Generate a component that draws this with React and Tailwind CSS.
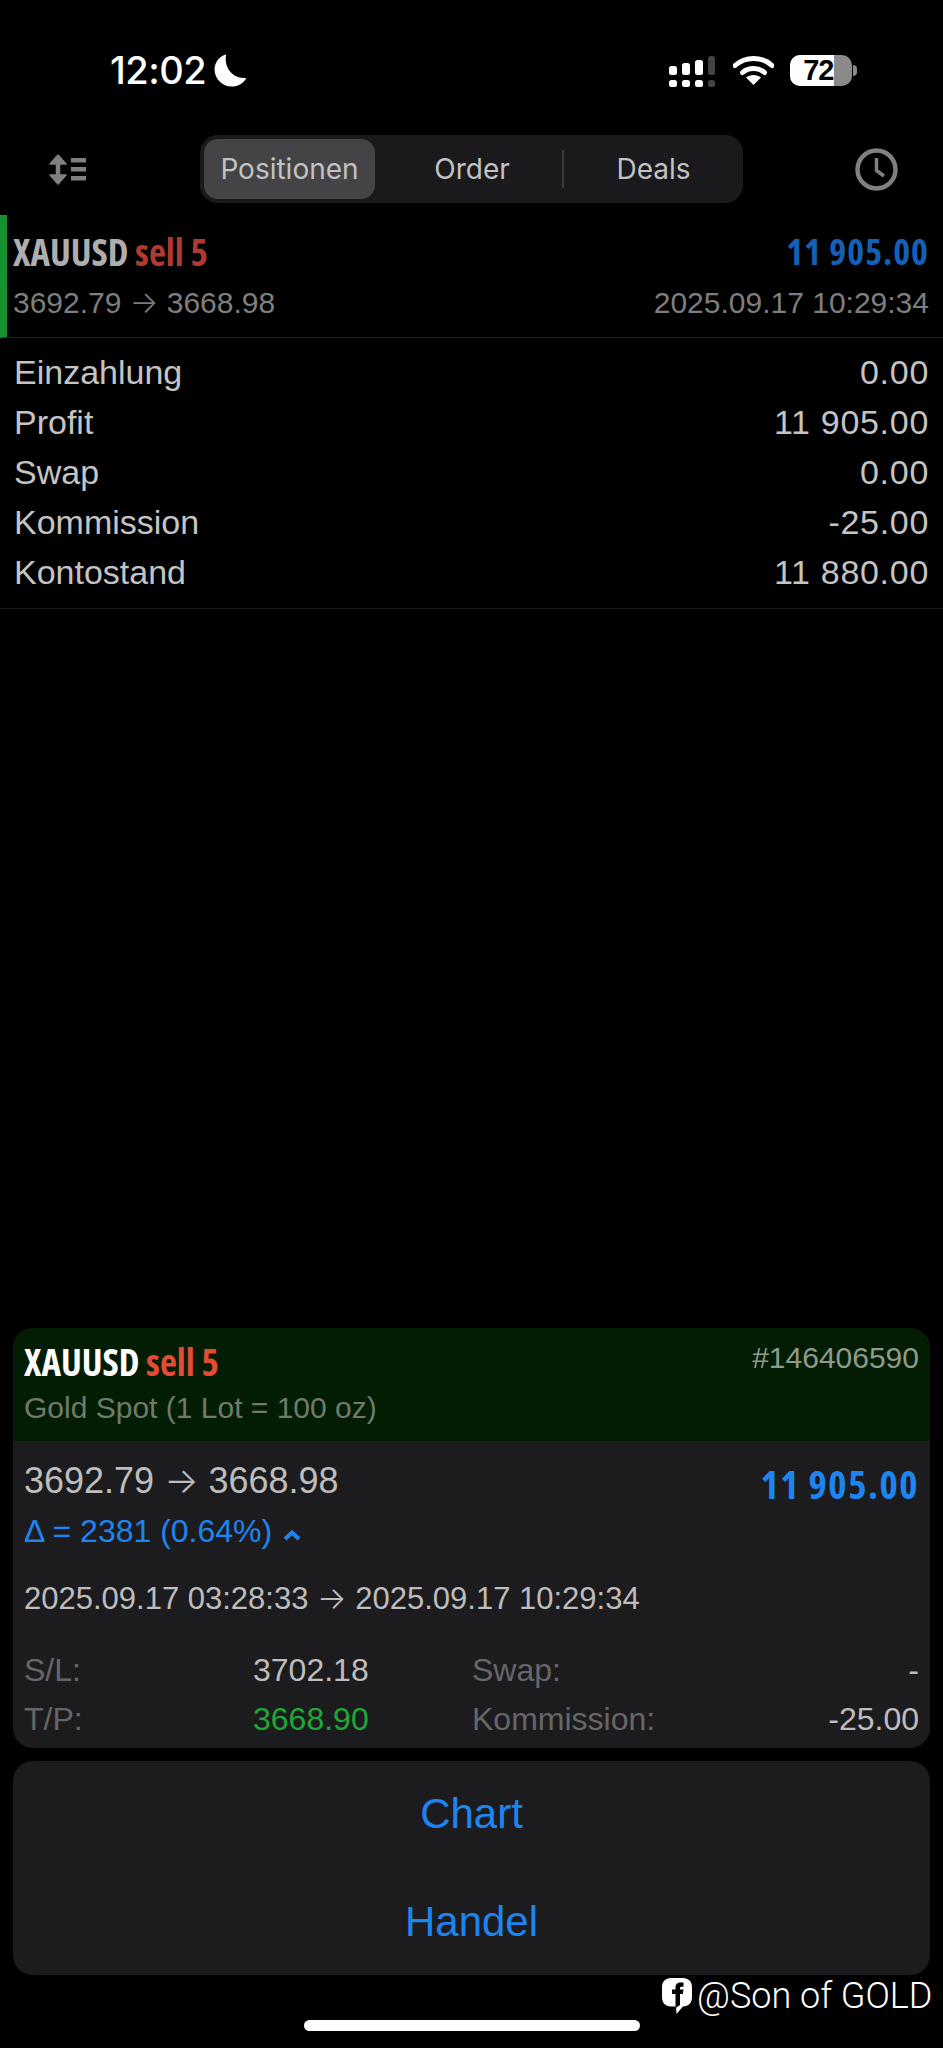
const sans = "font-['Liberation_Sans',Arial,sans-serif]";
const condensed = "font-['Open_Sans',sans-serif] [font-stretch:75%] font-bold";

const details = [
  ["Einzahlung", "0.00"],
  ["Profit", "11 905.00"],
  ["Swap", "0.00"],
  ["Kommission", "-25.00"],
  ["Kontostand", "11 880.00"],
];

const SignalIcon = () => (
  <svg width="47" height="32" viewBox="0 0 47 32" className="block">
    <rect x="0" y="10" width="8" height="9" rx="2.5" fill="#fff" />
    <rect x="13" y="7" width="8" height="12" rx="2.5" fill="#fff" />
    <rect x="26" y="4" width="8" height="15" rx="2.5" fill="#fff" />
    <rect x="39" y="0" width="7" height="19" rx="2.5" fill="#444" />
    <rect x="0" y="24" width="8" height="7" rx="2.5" fill="#fff" />
    <rect x="13" y="24" width="8" height="7" rx="2.5" fill="#fff" />
    <rect x="26" y="24" width="8" height="7" rx="2.5" fill="#fff" />
    <rect x="39" y="24" width="7" height="7" rx="2.5" fill="#444" />
  </svg>
);

const WifiIcon = () => (
  <svg width="41" height="30" viewBox="0 0 41 30" className="block">
    <path d="M2 10.5C12.5 1 28.5 1 39 10.5" fill="none" stroke="#fff" strokeWidth="5" strokeLinecap="round" />
    <path d="M9.5 17.5C15.5 12.2 25.5 12.2 31.5 17.5" fill="none" stroke="#fff" strokeWidth="5" strokeLinecap="round" />
    <path d="M20.5 30L13 22.6C17 19 24 19 28 22.6Z" fill="#fff" />
  </svg>
);

const Battery = () => (
  <div className="flex items-center">
    <div className="relative flex h-[31px] w-[62px] overflow-hidden rounded-[10px] bg-[#8a8a8a]">
      <div className="h-full w-[44px] bg-white" />
      <span className={`${sans} absolute left-[13px] top-0 text-[29px] font-bold leading-[31px] tracking-[-1px] text-black`}>72</span>
    </div>
    <div className="ml-[1px] h-[11px] w-[4px] rounded-r-full bg-[#8a8a8a]" />
  </div>
);

const SortIcon = () => (
  <svg width="37" height="33" viewBox="0 0 37 33" className="block">
    <path d="M9 3V30" stroke="#808080" strokeWidth="4.5" />
    <path d="M1 11L9 2L17 11Z" fill="#808080" stroke="#808080" strokeWidth="1.5" strokeLinejoin="round" />
    <path d="M1 22L9 31L17 22Z" fill="#808080" stroke="#808080" strokeWidth="1.5" strokeLinejoin="round" />
    <rect x="22" y="5" width="15" height="4.5" fill="#808080" />
    <rect x="22" y="14" width="15" height="4.5" fill="#808080" />
    <rect x="22" y="23" width="15" height="4.5" fill="#808080" />
  </svg>
);

const ClockIcon = () => (
  <svg width="43" height="43" viewBox="0 0 43 43" className="block">
    <circle cx="21.5" cy="21.5" r="19" fill="none" stroke="#808080" strokeWidth="4.5" />
    <path d="M21.5 10V22.5L29 28" fill="none" stroke="#808080" strokeWidth="3.5" />
  </svg>
);

const FacebookMark = () => (
  <svg width="30" height="36" viewBox="0 0 30 36" className="block">
    <path
      d="M9 0H21C26.5 0 30 3.5 30 9V19C30 25 26.5 28.5 21 28.5L14.5 36L14 28.5H9C3.5 28.5 0 25 0 19V9C0 3.5 3.5 0 9 0Z"
      fill="#fff"
    />
    <path
      d="M13.5 30V16H10V11.5H13.5V9.5C13.5 6 15.5 4.5 18.5 4.5H21.5V8.8H19.5C18.3 8.8 18 9.4 18 10.4V11.5H21.5L20.8 16H18V27Z"
      fill="#000"
    />
  </svg>
);

// the thin long arrow between two prices
const Arrow = () => <span className="font-['Inter',sans-serif] font-light">→</span>;

const Title = ({ symbolClass, sellClass }) => (
  <div className={`${condensed} text-[37px] leading-[40px]`}>
    <span className={symbolClass}>XAUUSD</span>{" "}
    <span className={sellClass}>sell 5</span>
  </div>
);

export default function App() {
  return (
    <div className={`${sans} relative flex h-[2048px] w-[943px] flex-col overflow-hidden bg-black`}>
      {/* status bar */}
      <div className="mt-[43px] flex h-[54px] items-center">
        <span className="ml-[110px] font-['Inter',sans-serif] text-[38px] font-medium tracking-[-0.5px] text-white">12:02</span>
        <svg width="33" height="33" viewBox="0 0 30 30" className="ml-[8px] block">
          <path d="M11 0.5C5 2 0.5 7.5 0.5 14C0.5 22.5 7.5 29.5 16 29.5C22 29.5 27 26.5 29.5 21.5C20 23.5 8.5 15 11 0.5Z" fill="#fff" />
        </svg>
        <div className="ml-[422px] mt-[3px]"><SignalIcon /></div>
        <div className="ml-[17px]"><WifiIcon /></div>
        <div className="ml-[16px]"><Battery /></div>
      </div>

      {/* toolbar */}
      <div className="mt-[38px] flex h-[68px] items-center">
        <div className="ml-[49px]"><SortIcon /></div>
        <div className="ml-[114px] flex h-[68px] w-[543px] items-center rounded-[18px] bg-[#1a1a1c] p-[4px] font-['Inter',sans-serif] text-[28px] text-[#c2c2c2]">
          <div className="flex h-[60px] w-[171px] items-center justify-center rounded-[14px] bg-[#444447]">Positionen</div>
          <div className="flex h-[60px] w-[187px] items-center justify-center pl-[7px]">Order</div>
          <div className="h-[38px] w-[2px] bg-[#3a3a3c]" />
          <div className="flex h-[60px] flex-1 items-center justify-center pl-[4px]">Deals</div>
        </div>
        <div className="ml-[112px]"><ClockIcon /></div>
      </div>

      {/* position row */}
      <div className="mt-[12px] flex h-[123px] flex-col border-b border-l-[7px] border-b-[#1f1f21] border-l-[#17912f] pl-[6px] pr-[14px] pt-[17px]">
        <div className="flex items-center justify-between">
          <Title symbolClass="text-[#aeaeae]" sellClass="text-[#b03a2e]" />
          <span className={`${condensed} text-[36px] leading-[40px] tracking-[1px] text-[#1460b8]`}>11 905.00</span>
        </div>
        <div className="mt-[12px] flex items-center justify-between text-[30px] leading-[36px] text-[#7e7e7e]">
          <span>3692.79 <Arrow /> 3668.98</span>
          <span>2025.09.17 10:29:34</span>
        </div>
      </div>

      {/* details */}
      <div className="flex h-[271px] flex-col border-b border-b-[#1a1a1c] px-[14px] pt-[9px] text-[34px] leading-[50px] text-[#c4c4c4]">
        {details.map(([label, value]) => (
          <div key={label} className="flex h-[50px] items-center justify-between">
            <span>{label}</span>
            <span className="tracking-[0.7px]">{value}</span>
          </div>
        ))}
      </div>

      {/* ticket card */}
      <div className="mx-[13px] mt-auto overflow-hidden rounded-[20px] bg-[#1c1c1e]">
        <div className="h-[113px] bg-[#031d03] px-[11px] pt-[14px]">
          <div className="flex items-start justify-between">
            <Title symbolClass="text-white" sellClass="text-[#e24c34]" />
            <span className="mt-[-2px] text-[30px] leading-[36px] text-[#8f998d]">#146406590</span>
          </div>
          <div className="mt-[8px] text-[30px] leading-[36px] text-[#6f7a6d]">Gold Spot (1 Lot = 100 oz)</div>
        </div>
        <div className="h-[307px] px-[11px] pt-[18px]">
          <div className="flex items-start justify-between">
            <span className="text-[36px] leading-[42px] text-[#bdbdbd]">3692.79 <Arrow /> 3668.98</span>
            <span className={`${condensed} mt-[4px] text-[39px] leading-[42px] tracking-[1.5px] text-[#1e84f0]`}>11 905.00</span>
          </div>
          <div className="mt-[7px] flex items-center text-[32px] leading-[38px] text-[#1e84f0]">
            <span>Δ = 2381 (0.64%)</span>
            <svg width="18" height="11" viewBox="0 0 18 11" className="ml-[11px] mt-[8px] block">
              <path d="M2 9L9 2.5L16 9" fill="none" stroke="#1e84f0" strokeWidth="4" />
            </svg>
          </div>
          <div className="mt-[30px] text-[31px] leading-[36px] text-[#bdbdbd]">2025.09.17 03:28:33 <Arrow /> 2025.09.17 10:29:34</div>
          <div className="mt-[29px] grid grid-cols-[229px_219px_1fr_auto] text-[32px] leading-[49px]">
            <span className="text-[#666668]">S/L:</span>
            <span className="text-[#bdbdbd]">3702.18</span>
            <span className="text-[#666668]">Swap:</span>
            <span className="text-right text-[#bdbdbd]">-</span>
            <span className="text-[#666668]">T/P:</span>
            <span className="text-[#1fa834]">3668.90</span>
            <span className="text-[#666668]">Kommission:</span>
            <span className="text-right text-[#bdbdbd]">-25.00</span>
          </div>
        </div>
      </div>

      {/* actions */}
      <div className="mx-[13px] mt-[13px] flex h-[214px] flex-col rounded-[20px] bg-[#1c1c1e] pt-[10px] text-[42px] text-[#1e84f0]">
        <div className="flex h-[84px] items-center justify-center">Chart</div>
        <div className="mt-[24px] flex h-[84px] items-center justify-center">Handel</div>
      </div>

      {/* home indicator */}
      <div className="mx-auto mb-[17px] mt-[45px] h-[11px] w-[336px] rounded-full bg-white" />

      {/* watermark */}
      <div className="absolute left-[662px] top-[1978px] flex items-center text-white">
        <FacebookMark />
        <span className="ml-[5px] font-['Roboto',sans-serif] text-[36px] font-light leading-[36px]">@Son of GOLD</span>
      </div>
    </div>
  );
}
